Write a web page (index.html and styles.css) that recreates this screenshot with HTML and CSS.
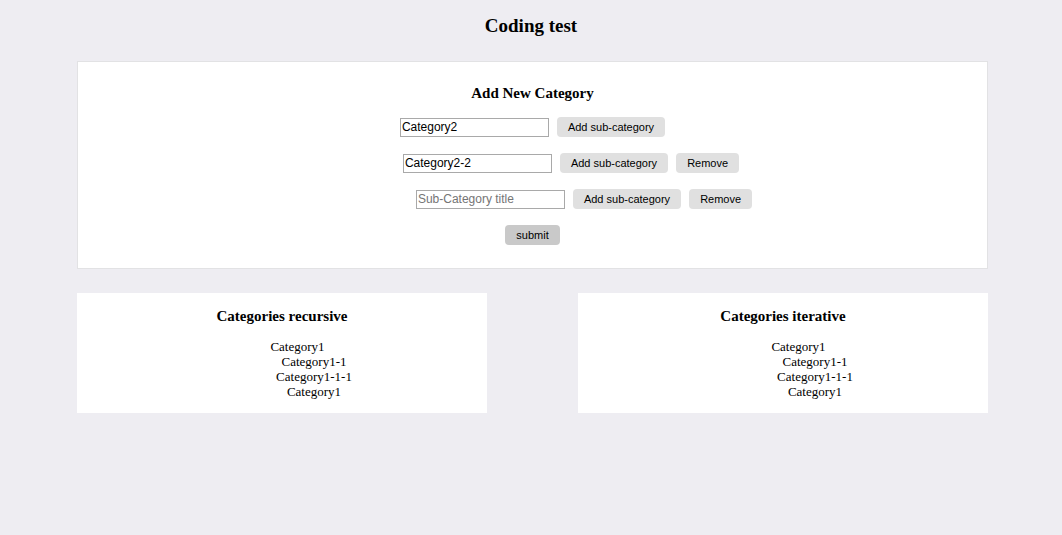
FILE: index.html
```html
<!DOCTYPE html>
<html>
<head>
<meta charset="utf-8">
<link rel="stylesheet" href="styles.css">
</head>
<body>
<h1 class="title">Coding test</h1>
<main class="wrap">
  <section class="card form-card">
    <h2 class="card-title">Add New Category</h2>
    <div class="rows">
      <div class="row">
        <input class="field" type="text" value="Category2">
        <button class="btn">Add sub-category</button>
      </div>
      <div class="row lvl1">
        <input class="field" type="text" value="Category2-2">
        <button class="btn">Add sub-category</button>
        <button class="btn">Remove</button>
      </div>
      <div class="row lvl2">
        <input class="field" type="text" placeholder="Sub-Category title">
        <button class="btn">Add sub-category</button>
        <button class="btn">Remove</button>
      </div>
      <div class="row">
        <button class="btn submit">submit</button>
      </div>
    </div>
  </section>
  <div class="lists">
    <section class="card list-card">
      <h2 class="card-title">Categories recursive</h2>
      <ul class="tree">
        <li class="l0">Category1</li>
        <li class="l1">Category1-1</li>
        <li class="l1">Category1-1-1</li>
        <li class="l1">Category1</li>
      </ul>
    </section>
    <section class="card list-card">
      <h2 class="card-title">Categories iterative</h2>
      <ul class="tree">
        <li class="l0">Category1</li>
        <li class="l1">Category1-1</li>
        <li class="l1">Category1-1-1</li>
        <li class="l1">Category1</li>
      </ul>
    </section>
  </div>
</main>
</body>
</html>
```

FILE: styles.css
```css
html, body {
  margin: 0;
  padding: 0;
  background: #eeedf2;
  font-family: "Liberation Serif", "Times New Roman", serif;
  color: #000;
}
.title {
  margin: 0;
  padding-top: 15px;
  height: 61px;
  box-sizing: border-box;
  text-align: center;
  font-size: 19px;
  font-weight: bold;
  line-height: 22px;
}
.wrap {
  width: 911px;
  margin-left: 77px;
}
.card {
  background: #fff;
  box-sizing: border-box;
}
.form-card {
  border: 1px solid #e2e2e4;
  height: 208px;
  padding-top: 21px;
}
.card-title {
  margin: 0;
  text-align: center;
  font-size: 15px;
  font-weight: bold;
  line-height: 20px;
}
.rows {
  margin-top: 14px;
  display: flex;
  flex-direction: column;
  gap: 16px;
}
.row {
  display: flex;
  justify-content: center;
  align-items: center;
  gap: 8px;
  height: 20px;
}
.lvl1 { padding-left: 77px; }
.lvl2 { padding-left: 103px; }
.field {
  width: 149px;
  height: 19px;
  box-sizing: border-box;
  border: 1px solid #a9a9a9;
  padding: 0 1px;
  font-family: "Liberation Sans", Arial, sans-serif;
  font-size: 12px;
  color: #000;
  background: #fff;
  outline: none;
  margin: 0;
}
.field::placeholder { color: #757575; }
.btn {
  height: 20px;
  border: none;
  border-radius: 4px;
  background: #e0e0e0;
  font-family: "Liberation Sans", Arial, sans-serif;
  font-size: 11px;
  color: #000;
  padding: 0 11px;
  margin: 0;
}
.submit {
  background: #c9c9c9;
}
.lists {
  margin-top: 24px;
  display: flex;
  justify-content: space-between;
}
.list-card {
  width: 410px;
  height: 120px;
  padding-top: 13px;
}
.tree {
  list-style: none;
  margin: 13px 0 0;
  padding: 0;
  text-align: center;
  font-size: 13px;
  line-height: 15px;
}
.l0 { padding-left: 31px; }
.l1 { padding-left: 64px; }
```
